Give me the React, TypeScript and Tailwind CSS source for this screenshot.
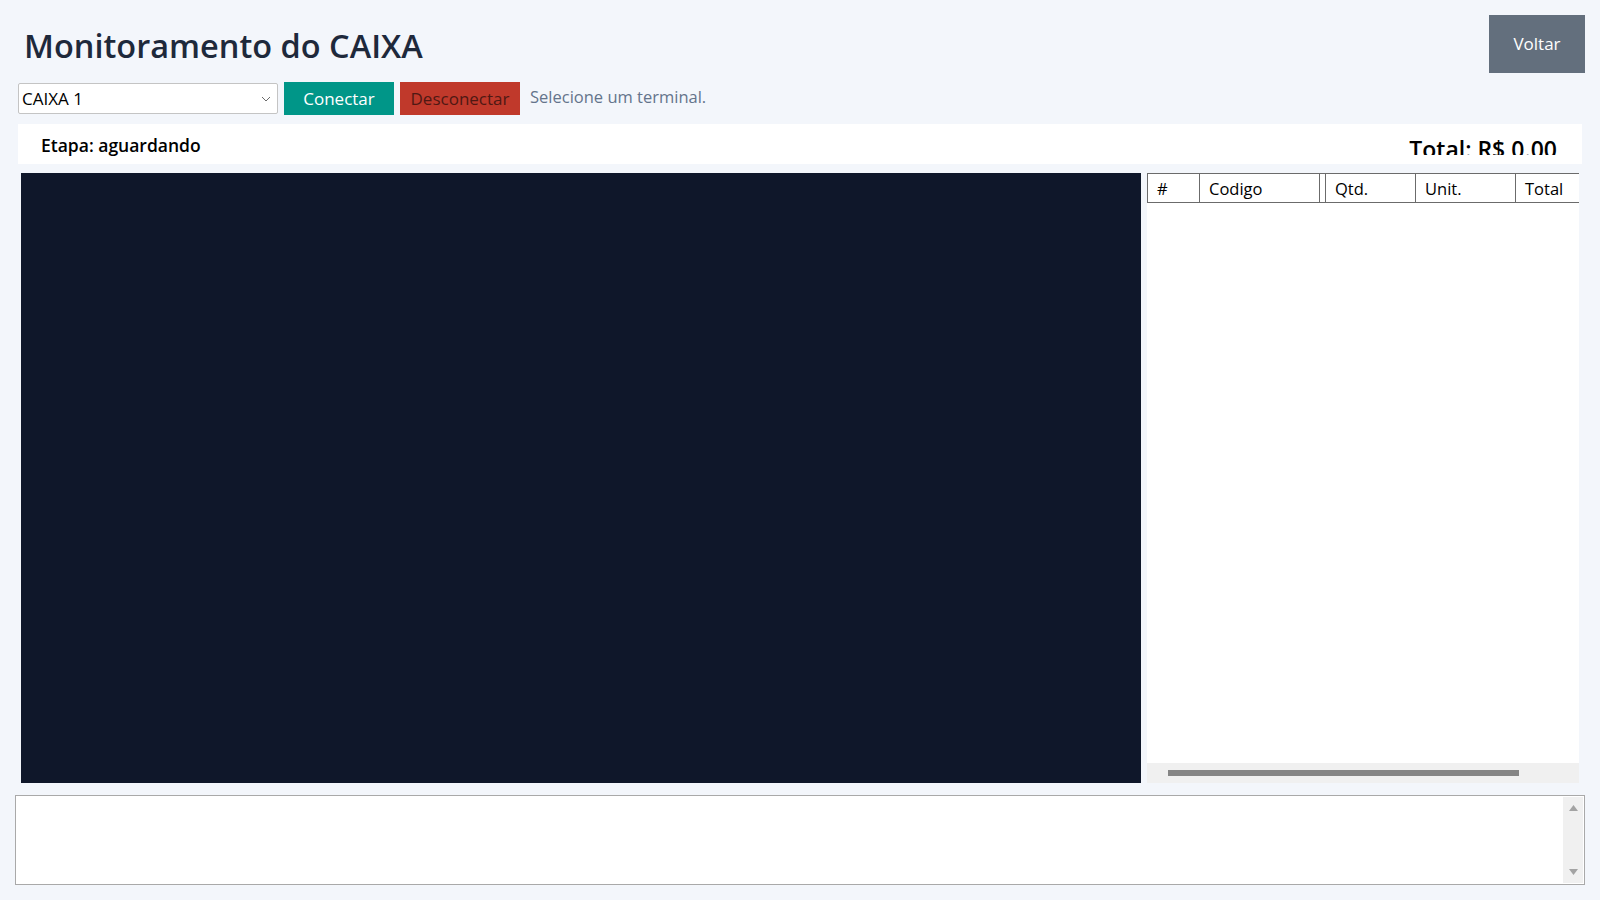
import { useState } from "react";

const font = { fontFamily: '"Open Sans", "Noto Sans", sans-serif' };

function Chevron() {
  return (
    <svg width="10" height="6" viewBox="0 0 10 6" className="shrink-0">
      <polyline points="1,1 5,5 9,1" fill="none" stroke="#6b6b6b" strokeWidth="1" />
    </svg>
  );
}

function Triangle({ down }: { down?: boolean }) {
  return (
    <svg width="9" height="6" viewBox="0 0 9 6">
      <polygon points={down ? "0,0 9,0 4.5,6" : "4.5,0 9,6 0,6"} fill="#a3a3a3" />
    </svg>
  );
}

export default function App() {
  const [terminal, setTerminal] = useState("CAIXA 1");
  const [log, setLog] = useState("");

  return (
    <div className="min-h-screen w-full bg-[#f3f6fb] px-[15px] text-[#111]" style={font}>
      <div className="flex items-start justify-between pt-[15px]">
        <h1 className="ml-[9px] mt-[11px] text-[32.5px] leading-[40px] font-semibold text-[#1e293b]">Monitoramento do CAIXA</h1>
        <button className="w-[96px] h-[58px] bg-[#636f7d] text-white text-[17px]">Voltar</button>
      </div>

      <div className="mt-[9px] flex items-center">
        <div className="ml-[3px] w-[260px] h-[31px] bg-white border border-[#c4c4c4] rounded-[2px] flex items-center pl-[3px] pr-[6px]">
          <select
            value={terminal}
            onChange={(e) => setTerminal(e.target.value)}
            className="flex-1 appearance-none bg-transparent outline-none text-[17px] text-black"
          >
            <option>CAIXA 1</option>
            <option>CAIXA 2</option>
            <option>CAIXA 3</option>
          </select>
          <Chevron />
        </div>
        <button className="ml-[6px] w-[110px] h-[33px] bg-[#009688] text-white text-[17px]">Conectar</button>
        <button className="ml-[6px] w-[120px] h-[33px] bg-[#c0392b] text-[#4f1813] text-[17px]">Desconectar</button>
        <span className="ml-[10px] -mt-[2px] text-[16.5px] text-[#64748b]">Selecione um terminal.</span>
      </div>

      <div className="mt-[9px] mx-[3px] h-[40px] bg-white flex items-start justify-between pl-[23px] pr-[25px]">
        <span className="mt-[9px] text-[17.5px] leading-[24px] font-semibold text-black">Etapa: aguardando</span>
        <div className="h-[31px] overflow-hidden">
          <div className="pt-[10px] text-[23px] leading-[30px] font-semibold text-black whitespace-nowrap">Total: R$ 0.00</div>
        </div>
      </div>

      <div className="mt-[9px] flex gap-[6px] h-[610px]">
        <div className="ml-[6px] w-[1120px] bg-[#0f172a]" />
        <div className="w-[432px] bg-white flex flex-col">
          <div className="flex-1 overflow-hidden">
            <table className="border-collapse text-[16.5px] text-black">
              <thead>
                <tr className="h-[28px]">
                  <th className="w-[52px] min-w-[52px] border border-[#6b6b6b] pl-[9px] pt-[3px] text-left font-normal">#</th>
                  <th className="w-[120px] min-w-[120px] border border-[#6b6b6b] pl-[9px] pt-[3px] text-left font-normal">Codigo</th>
                  <th className="w-[6px] min-w-[6px] border border-[#6b6b6b] p-0 font-normal"></th>
                  <th className="w-[90px] min-w-[90px] border border-[#6b6b6b] pl-[9px] pt-[3px] text-left font-normal">Qtd.</th>
                  <th className="w-[100px] min-w-[100px] border border-[#6b6b6b] pl-[9px] pt-[3px] text-left font-normal">Unit.</th>
                  <th className="w-[100px] min-w-[100px] border border-[#6b6b6b] pl-[9px] pt-[3px] text-left font-normal">Total</th>
                </tr>
              </thead>
              <tbody />
            </table>
          </div>
          <div className="h-[20px] bg-[#f0f0f0] pl-[21px] pt-[7px]">
            <div className="w-[351px] h-[6px] bg-[#858585]" />
          </div>
        </div>
      </div>

      <div className="mt-[12px] h-[90px] border border-[#a9a9a9] bg-white flex p-[1px]">
        <textarea
          value={log}
          onChange={(e) => setLog(e.target.value)}
          className="flex-1 resize-none outline-none bg-white text-[15px] px-[4px] py-[2px]"
        />
        <div className="w-[20px] bg-[#f0f0f0] flex flex-col items-center justify-between pt-[8px] pb-[8px]">
          <Triangle />
          <Triangle down />
        </div>
      </div>
    </div>
  );
}
